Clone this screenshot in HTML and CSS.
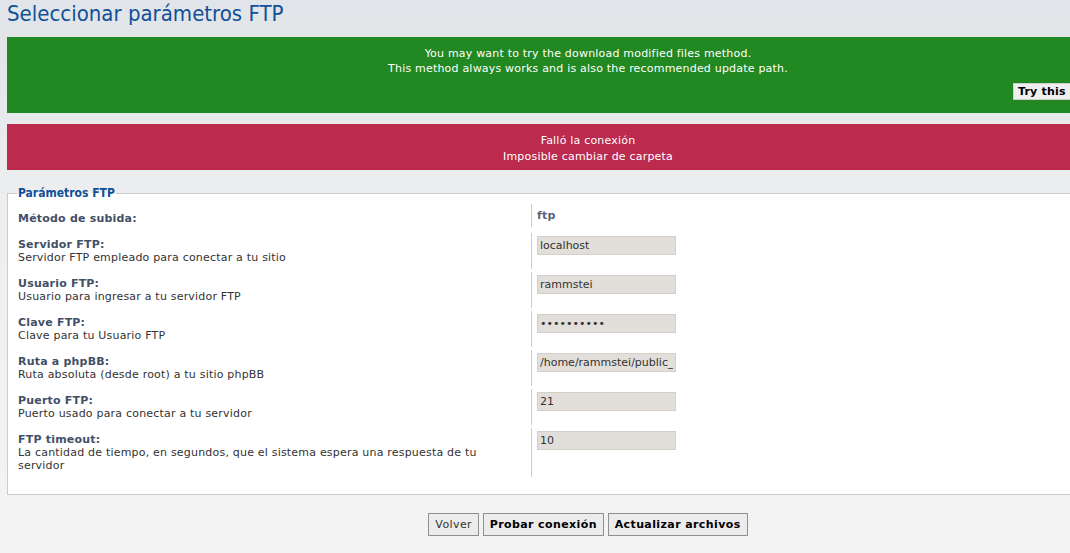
FILE: index.html
```html
<!DOCTYPE html>
<html lang="es">
  <head>
    <meta charset="UTF-8" />
    <meta name="viewport" content="width=device-width, initial-scale=1.0" />
    <title>Seleccionar parámetros FTP</title>
    <link rel="stylesheet" href="styles.css">
  </head>
  <body>
    <div class="main">
      <h1>Seleccionar parámetros FTP</h1>

      <div class="successbox">
        <p>You may want to try the download modified files method.<br />This method always works and is also the recommended update path.</p>
        <div class="quick">
          <button class="button2">Try this method</button>
        </div>
      </div>

      <div class="errorbox">
        <p>Falló la conexión<br />Imposible cambiar de carpeta</p>
      </div>

      <form id="ftp-form">
        <fieldset>
          <legend>Parámetros FTP</legend>
          <dl class="first">
            <dt><label>Método de subida:</label></dt>
            <dd><strong class="method">ftp</strong></dd>
          </dl>
          <dl>
            <dt><label for="host">Servidor FTP:</label><br /><span>Servidor FTP empleado para conectar a tu sitio</span></dt>
            <dd><input type="text" id="host" value="localhost" /></dd>
          </dl>
          <dl>
            <dt><label for="username">Usuario FTP:</label><br /><span>Usuario para ingresar a tu servidor FTP</span></dt>
            <dd><input type="text" id="username" value="rammstei" /></dd>
          </dl>
          <dl>
            <dt><label for="password">Clave FTP:</label><br /><span>Clave para tu Usuario FTP</span></dt>
            <dd><input type="password" id="password" value="xxxxxxxxxx" /></dd>
          </dl>
          <dl>
            <dt><label for="root_path">Ruta a phpBB:</label><br /><span>Ruta absoluta (desde root) a tu sitio phpBB</span></dt>
            <dd><input type="text" id="root_path" value="/home/rammstei/public_html" /></dd>
          </dl>
          <dl>
            <dt><label for="port">Puerto FTP:</label><br /><span>Puerto usado para conectar a tu servidor</span></dt>
            <dd><input type="text" id="port" value="21" /></dd>
          </dl>
          <dl>
            <dt><label for="timeout">FTP timeout:</label><br /><span>La cantidad de tiempo, en segundos, que el sistema espera una respuesta de tu servidor</span></dt>
            <dd><input type="text" id="timeout" value="10" /></dd>
          </dl>
        </fieldset>

        <div class="submit-buttons">
          <button type="button" class="button2 plain">Volver</button>
          <button type="button" class="button2">Probar conexión</button>
          <button type="submit" class="button2">Actualizar archivos</button>
        </div>
      </form>
    </div>
  </body>
</html>
```

FILE: styles.css
```css
html, body {
  margin: 0;
  padding: 0;
}
body {
  font-family: "DejaVu Sans", Verdana, sans-serif;
  font-size: 11px;
  letter-spacing: 0.2px;
  color: #536482;
  background: linear-gradient(#e1e4e8 0, #eceeef 200px, #f3f3f3 500px);
  min-height: 553px;
  overflow: hidden;
}
.main {
  width: 1162px;
  padding: 0 7px;
}
h1 {
  font-family: "DejaVu Sans Condensed", "DejaVu Sans", sans-serif;
  font-weight: normal;
  font-size: 22px;
  letter-spacing: 0;
  color: #115098;
  margin: 0;
  padding: 1px 0 0;
  height: 37px;
  box-sizing: border-box;
}
.successbox {
  background-color: #228822;
  color: #fff;
  text-align: center;
  height: 76px;
  box-sizing: border-box;
  padding: 9px 10px 0;
}
.successbox p,
.errorbox p {
  margin: 0;
  line-height: 15px;
}
.quick {
  text-align: left;
  padding: 7px 0 0 996px;
}
.quick .button2 {
  height: 17px;
  padding: 0 4px;
  border: 1px solid #cfcfcf;
  background: #efefef;
  color: #000;
  font-family: "DejaVu Sans", Verdana, sans-serif;
  font-size: 11px;
  letter-spacing: 0.2px;
  font-weight: bold;
}
.errorbox {
  background-color: #bc2a4d;
  color: #fff;
  text-align: center;
  margin-top: 11px;
  height: 46px;
  box-sizing: border-box;
  padding: 9px 10px 0;
}
.errorbox p {
  line-height: 16px;
}
fieldset {
  margin: 16px 0 0;
  padding: 4px 10px 14px;
  border: 1px solid #cccccc;
  border-right: none;
  background: #fff;
}
legend {
  font-family: "DejaVu Sans Condensed", "DejaVu Sans", sans-serif;
  font-size: 12px;
  font-weight: bold;
  letter-spacing: 0;
  color: #115098;
  padding: 0 1px;
  margin-left: -1px;
}
dl {
  display: flex;
  margin: 0 0 3px;
}
dt {
  width: 513px;
  padding: 5px 36px 5px 0;
  box-sizing: border-box;
  color: #333;
  line-height: 13px;
}
dt label {
  font-weight: bold;
  color: #425067;
}
dd {
  margin: 0;
  padding: 3px 0 0 5px;
  border-left: 1px solid #cccccc;
}
dl.first {
  margin-bottom: 6px;
}
dl.first dt {
  padding-top: 8px;
  padding-bottom: 2px;
}
dl.first dd {
  padding-top: 5px;
}
.method {
  color: #536482;
  line-height: 13px;
}
input {
  width: 139px;
  height: 19px;
  box-sizing: border-box;
  border: 1px solid #d4d0c8;
  background: #e2ded9;
  font-family: "DejaVu Sans", Tahoma, sans-serif;
  font-size: 11px;
  color: #333;
  padding: 0 2px;
}
.submit-buttons {
  text-align: center;
  padding-top: 18px;
}
.submit-buttons .button2 {
  height: 23px;
  padding: 0 6px;
  margin: 0;
  border: 1px solid #8f8f8f;
  background: #ececec;
  font-family: "DejaVu Sans", Verdana, sans-serif;
  font-size: 11px;
  letter-spacing: 0.4px;
  font-weight: bold;
  color: #000;
}
.submit-buttons .plain {
  font-weight: normal;
  color: #333;
}
```
